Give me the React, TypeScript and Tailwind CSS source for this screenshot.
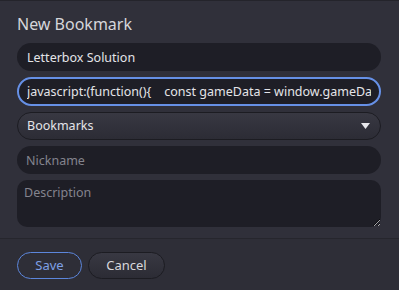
import React from "react";

export default function App() {
  return (
    <div className="w-[399px] h-[290px] bg-[#30303a] border-t border-[#24242b] flex flex-col text-[#dcdce0] overflow-hidden font-['Noto_Sans','Open_Sans',sans-serif]">
      <div className="px-[17px] pt-[11px] flex flex-col">
        <div className="text-[16px] leading-[24px] text-[#d6d6da] mb-[7px]">New Bookmark</div>
        <div className="w-[364px] flex flex-col gap-[6px]">
          <input
            className="h-[28px] rounded-full bg-[#1e1e26] px-[10px] text-[12.5px] text-[#e4e4e8] outline-none"
            defaultValue="Letterbox Solution"
            readOnly
          />
          <input
            className="h-[29px] rounded-full bg-[#1e1e26] border-2 border-[#6690e6] px-[8px] text-[12.5px] text-[#e4e4e8] outline-none"
            defaultValue="javascript:(function(){    const gameData = window.gameData; if (!gameData) return;"
            readOnly
          />
          <div className="h-[28px] rounded-full border border-[#1c1c22] bg-gradient-to-b from-[#383842] to-[#2c2c35] flex items-center justify-between pl-[9px] pr-[10px] text-[12.5px] text-[#e4e4e8]">
            <span>Bookmarks</span>
            <svg width="9" height="6" viewBox="0 0 9 6">
              <path d="M0 0 H9 L4.5 6 Z" fill="#e8e8ec" />
            </svg>
          </div>
          <input
            className="h-[28px] rounded-full bg-[#1e1e26] px-[9px] text-[12.5px] text-[#e4e4e8] placeholder:text-[#84848e] outline-none"
            placeholder="Nickname"
            readOnly
          />
          <textarea
            className="h-[47px] rounded-[10px] bg-[#1e1e26] px-[7px] py-[4px] text-[12.5px] text-[#e4e4e8] placeholder:text-[#84848e] outline-none resize-y"
            placeholder="Description"
            readOnly
          />
        </div>
      </div>
      <div className="mt-[11px] border-t border-[#26262d]" />
      <div className="flex-1 bg-[#2e2e37] px-[17px] pt-[13px] flex gap-[6px] items-start">
        <button className="h-[27px] w-[65px] rounded-full border border-[#5c86dc] text-[13px] text-[#7ea0e6]">
          Save
        </button>
        <button className="h-[27px] w-[77px] rounded-full border border-[#1c1c22] bg-gradient-to-b from-[#383842] to-[#2c2c35] text-[13px] text-[#d8d8dc]">
          Cancel
        </button>
      </div>
    </div>
  );
}
